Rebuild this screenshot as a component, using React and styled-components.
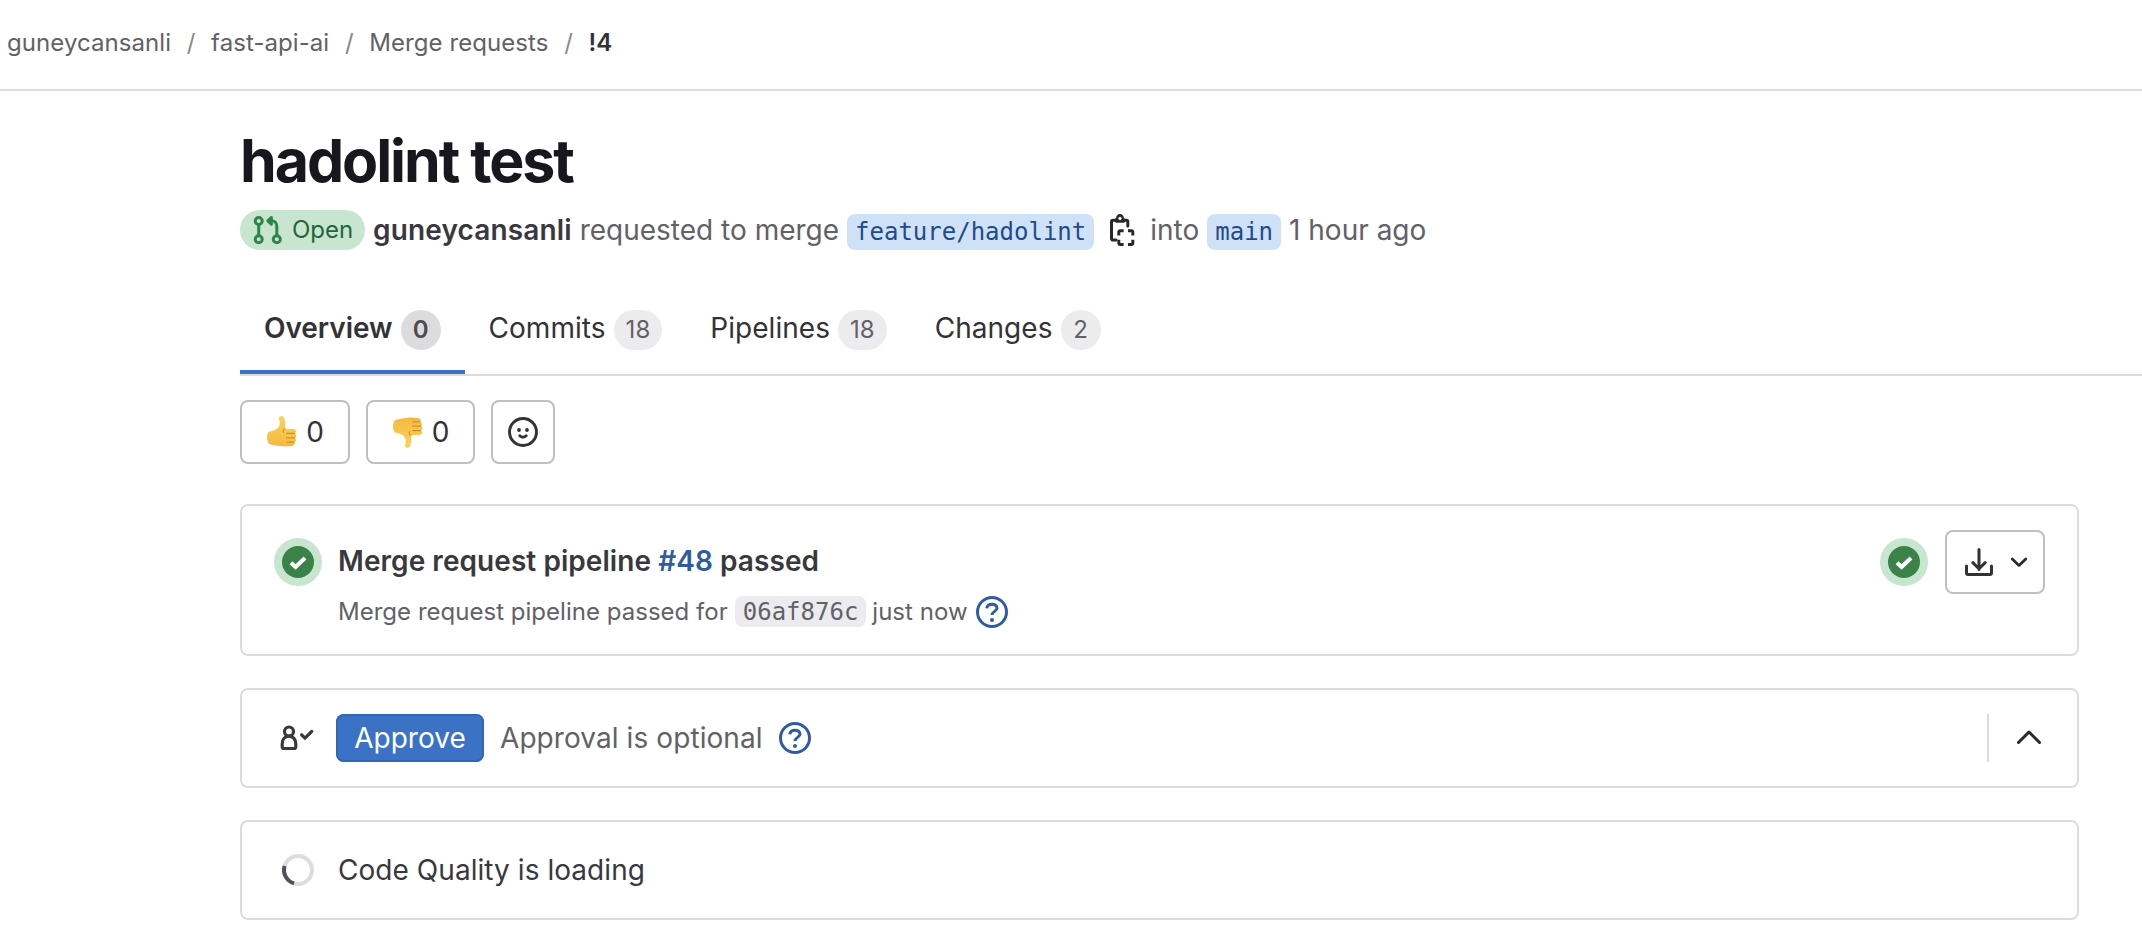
import React from "react";
import styled, { createGlobalStyle } from "styled-components";

const Global = createGlobalStyle`
  * { box-sizing: border-box; }
  body { margin: 0; background: #fff; color: #3a383f; font-family: Inter, "Noto Sans", sans-serif; font-size: 28px; line-height: 40px; }
  svg { display: block; flex: none; overflow: visible; }
`;

const Page = styled.div`width: 100%; height: 940px; overflow: hidden; background: #fff;`;

const TopBar = styled.nav`
  display: flex; align-items: center; height: 91px; padding: 0 0 4px 7px; letter-spacing: 0.07px;
  border-bottom: 2px solid #dcdcde; font-size: 24px; color: #626168; white-space: pre;
`;
const Crumb = styled.span`
  color: ${(p) => (p.$current ? "#333238" : "#626168")};
  font-weight: ${(p) => (p.$current ? 600 : 400)};
`;
const Slash = styled.span`width: 40px; text-align: center; color: #89888d;`;

const Main = styled.main`padding: 35px 0 0 240px;`;
const Title = styled.h1`
  margin: 0; font-size: 59px; line-height: 70px; font-weight: 700; color: #18171d; letter-spacing: -2.05px; height: 70px;
`;
const Meta = styled.div`
  display: flex; align-items: center; height: 40px; margin-top: 14px; color: #626168; white-space: pre;
`;
const Status = styled.span`
  display: flex; align-items: center; width: 125px; height: 40px; padding-left: 12px; gap: 8px;
  border-radius: 20px; background: #c8e5cf; color: #24663b; font-size: 24px; margin-right: 8px;
`;
const Author = styled.strong`font-weight: 600; color: #3a383f; margin-right: 8px; letter-spacing: 0.14px;`;
const Branch = styled.code`
  height: 36px; padding: 0 8px; margin: 4px 0 0 8px; border-radius: 8px;
  background: #cfe1f7; color: #214a8b; font: 24px/36px "DejaVu Sans Mono", monospace;
`;
const CopyButton = styled.span`margin: 0 12px 0 12px;`;
const Ago = styled.span`margin-left: 8px;`;

const Tabs = styled.div`
  display: flex; height: 70px; margin-top: 56px; border-bottom: 2px solid #dcdcde;
`;
const Tab = styled.div`
  display: flex; gap: 8px; padding: 2px 24px 0; height: 68px;
  color: #333238; font-weight: ${(p) => (p.$active ? 600 : 400)};
  letter-spacing: ${(p) => (p.$active ? "-0.05px" : "0.04px")};
  border-bottom: 4px solid ${(p) => (p.$active ? "#3b72c6" : "transparent")};
`;
const Count = styled.span`
  margin-top: 2px; min-width: 40px; padding: 0 12px; height: 40px; line-height: 40px; text-align: center;
  border-radius: 20px; font-size: 24px;
  background: ${(p) => (p.$active ? "#dcdcde" : "#ececef")};
  color: ${(p) => (p.$active ? "#4c4b51" : "#626168")};
`;

const Reactions = styled.div`display: flex; gap: 16px; margin-top: 24px;`;
const Button = styled.button`
  display: flex; align-items: center; justify-content: center; gap: 8px; height: 64px; width: ${(p) => p.$w}px;
  padding: 0; border: 2px solid #bfbfc3; border-radius: 8px; background: #fff; color: #333238; font: inherit;
`;

const Card = styled.section`
  display: flex; width: 1839px; height: ${(p) => p.$h}px; margin-top: ${(p) => p.$mt || 32}px;
  padding: 24px 32px 24px ${(p) => (p.$inset ? 40 : 32)}px; border: 2px solid #dcdcde; border-radius: 8px;
  align-items: ${(p) => p.$align || "center"};
`;
const CardBody = styled.div`flex: 1; margin-left: 16px;`;
const PipelineTitle = styled.div`font-weight: 600; white-space: pre; height: 40px; margin-top: 11px; letter-spacing: 0.06px;`;
const PipelineLink = styled.a`color: #2f5ca0;`;
const PipelineSub = styled.div`
  display: flex; align-items: center; height: 32px; margin-top: 15px; font-size: 24px; line-height: 32px;
  letter-spacing: 0.02px; color: #626168; white-space: pre;
`;
const Sha = styled.code`
  height: 31px; margin: 0 6px 1px 7px; padding: 0 8px; border-radius: 8px; background: #ececef; color: #626168;
  font: 24px/32px "DejaVu Sans Mono", monospace; letter-spacing: 0;
`;
const Actions = styled.div`display: flex; align-items: center; gap: 17px;`;
const StatusSlot = styled.span`margin-top: 8px;`;
const HelpSlot = styled.span`margin-left: ${(p) => p.$ml}px;`;
const CaretSlot = styled.span`margin: 0 -4px 0 4px;`;
const Approve = styled.button`
  width: 148px; height: 48px; margin-left: 22px; padding: 0; border: 0; border-radius: 8px; background: #3b72c6;
  box-shadow: inset 0 0 0 2px #2f68b4; color: #fff; font: inherit; line-height: 48px;
`;
const Optional = styled.span`margin-left: 16px; color: #626168; letter-spacing: 0.08px;`;
const Toggle = styled.div`
  display: flex; align-items: center; margin-left: auto; height: 48px; padding-left: 24px; border-left: 2px solid #dcdcde;
`;
const Loading = styled.span`margin-left: 24px; letter-spacing: 0.05px;`;

const Stroke = ({ size = 32, sw = 1.5, children, ...rest }) => (
  <svg width={size} height={size} viewBox="0 0 16 16" fill="none" stroke="currentColor" strokeWidth={sw} {...rest}>{children}</svg>
);
const MergeIcon = () => (
  <Stroke color="#2f8549">
    <circle cx="3.35" cy="3.5" r="1.75" /><circle cx="3.35" cy="12.6" r="1.75" /><circle cx="12.4" cy="12.6" r="1.75" />
    <path d="M3.35 5.25v5.6M12.4 10.85V6a2.6 2.6 0 0 0-2.6-2.6H8.4" />
    <path d="M9.7 1.7 7.9 3.4l1.8 1.7z" fill="currentColor" strokeLinecap="round" strokeLinejoin="round" />
  </Stroke>
);
const CopyIcon = () => (
  <Stroke color="#28272d">
    <path d="M5 13.05H3.5a.75.75 0 0 1-.75-.75V3.85a.75.75 0 0 1 .75-.75H5m4 0h1.15a.75.75 0 0 1 .75.75V6" strokeLinecap="round" />
    <path d="M4.5 2.3h.5a2 2.3 0 0 1 4 0h.5v1.3a.75.75 0 0 1-.75.75h-3.500a.75.75 0 0 1-.75-.75z" fill="currentColor" stroke="none" />
    <circle cx="7" cy="2.2" r=".8" fill="#fff" stroke="none" />
    <path d="M6.4 10.7V9.150a.75.75 0 0 1 .75-.75H8.800M11 8.400h1.650a.75.75 0 0 1 .75.75v1.550M13.400 12.900v1.550a.75.75 0 0 1-.75.75H11M8.800 15.200H7.150a.75.75 0 0 1-.75-.75V12.900" />
  </Stroke>
);
const CheckBadge = () => (
  <svg width="48" height="48" viewBox="0 0 48 48">
    <circle cx="24" cy="24" r="24" fill="#c8e5cf" /><circle cx="24" cy="24" r="16" fill="#3b8249" />
    <path d="M17 24.7 21.6 29 31 20" fill="none" stroke="#fff" strokeWidth="4" />
  </svg>
);
const HelpIcon = () => (
  <Stroke color="#2f5ca0">
    <circle cx="8" cy="8" r="7.25" />
    <path d="M5.4 6.2C5.5 4.900 6.600 4.100 8 4.100s2.500.8 2.500 2c0 1.500-2.500 1.700-2.500 3.400" /><circle cx="8" cy="12" r="1" fill="currentColor" stroke="none" />
  </Stroke>
);
const DownloadIcon = () => (
  <Stroke strokeLinecap="round" strokeLinejoin="round">
    <path d="M8 1.75v10M4.9 8.3 8 11.4l3.1-3.1M1.75 10v3.5c0 .4.35.75.75.75h11c.4 0 .75-.35.75-.75V10" />
  </Stroke>
);
const ChevronIcon = ({ up }) => (
  <Stroke size={up ? 32 : 24} sw={up ? 1.5 : 1.8} strokeLinecap="round" strokeLinejoin="round" color="#28272d">
    <path d={up ? "M2.75 10.25 8 5l5.25 5.25" : "M3.5 6 8 10.3 12.5 6"} />
  </Stroke>
);
const SmileIcon = () => (
  <Stroke>
    <circle cx="8" cy="8" r="6.75" /><circle cx="6" cy="7" r=".95" fill="currentColor" stroke="none" /><circle cx="10" cy="7" r=".95" fill="currentColor" stroke="none" />
    <path d="M6.4 9.9c.9.900 2.300.900 3.200 0" strokeLinecap="round" />
  </Stroke>
);
const ApprovalIcon = () => (
  <Stroke sw={1.6}>
    <circle cx="3.5" cy="4.75" r="2.25" />
    <path d="M3.500 7.100C1.400 7.100.1 8.700.1 11v1.200c0 .6.4 1.050 1 1.050h4.800c.6 0 1-.45 1-1.050V11c0-2.300-1.300-3.900-3.400-3.900z" />
    <path d="m9.800 6.400 1.700 1.700 3.400-3.400" strokeLinecap="round" strokeLinejoin="round" />
  </Stroke>
);
const Spinner = () => (
  <svg width="32" height="32" viewBox="0 0 32 32" fill="none" strokeWidth="4">
    <circle cx="16" cy="16" r="14" stroke="#dcdcde" /><path d="M2.6 12A14 14 0 0 0 12 29.4" stroke="#535158" />
  </svg>
);
const Thumb = ({ down }) => (
  <svg width="32" height="34" viewBox="0 0 32 34">
    <defs><linearGradient id="skin" x1="0" y1="0" x2="0" y2="1"><stop offset="0" stopColor="#fbd458" /><stop offset="1" stopColor="#f4b940" /></linearGradient></defs>
    <g transform={down ? "matrix(1 0 0 -1 0 34)" : undefined}>
      <path d="M13 3.500c-.3-2.900 4-3.600 5.200-.6 1.200 3.200 1.300 6.800.9 10.800l8.200.2c3.200.2 3.600 3.600 1.400 4.500 2.300.9 2.100 3.900.1 4.500 1.800 1 1.400 3.700-.6 4.200 1.200 1.500.2 3.600-2.200 3.800-4.300.5-8.200.7-11 .2-4.200-.3-8.500-.8-11.800-2.100C.6 26.500.5 20 2.200 17.600c1.600-2 5.800-1.700 8-3.400C14 11.600 14.400 8.500 13 3.500z" fill="url(#skin)" />
      <path d="M20.500 18.400h8M20.500 22.900h8M21 27.100h7M18.900 13.700c-1.900.8-2.400 2.500-1.300 3.700" fill="none" stroke="#cf8f30" strokeWidth="1.100" strokeLinecap="round" />
    </g>
  </svg>
);

const TABS = [["Overview", 0], ["Commits", 18], ["Pipelines", 18], ["Changes", 2]];

export default function App() {
  return (
    <Page>
      <Global />
      <TopBar>
        <Crumb>guneycansanli</Crumb><Slash>/</Slash><Crumb>fast-api-ai</Crumb><Slash>/</Slash>
        <Crumb>Merge requests</Crumb><Slash>/</Slash><Crumb $current>!4</Crumb>
      </TopBar>
      <Main>
        <Title>hadolint test</Title>
        <Meta>
          <Status><MergeIcon />Open</Status>
          <Author>guneycansanli</Author>
          <span>requested to merge</span>
          <Branch>feature/hadolint</Branch>
          <CopyButton><CopyIcon /></CopyButton>
          <span>into</span>
          <Branch>main</Branch>
          <Ago>1 hour ago</Ago>
        </Meta>
        <Tabs>
          {TABS.map(([name, n], i) => (
            <Tab key={name} $active={i === 0}>{name}<Count $active={i === 0}>{n}</Count></Tab>
          ))}
        </Tabs>
        <Reactions>
          <Button $w={110}><Thumb />0</Button>
          <Button $w={109}><Thumb down />0</Button>
          <Button $w={64}><SmileIcon /></Button>
        </Reactions>
        <Card $h={152} $mt={40} $align="flex-start">
          <StatusSlot><CheckBadge /></StatusSlot>
          <CardBody>
            <PipelineTitle>Merge request pipeline <PipelineLink>#48</PipelineLink> passed</PipelineTitle>
            <PipelineSub>
              Merge request pipeline passed for<Sha>06af876c</Sha>just now<HelpSlot $ml={8}><HelpIcon /></HelpSlot>
            </PipelineSub>
          </CardBody>
          <Actions>
            <CheckBadge />
            <Button $w={100}><DownloadIcon /><CaretSlot><ChevronIcon /></CaretSlot></Button>
          </Actions>
        </Card>
        <Card $h={100} $inset>
          <ApprovalIcon />
          <Approve>Approve</Approve>
          <Optional>Approval is optional</Optional>
          <HelpSlot $ml={16}><HelpIcon /></HelpSlot>
          <Toggle><ChevronIcon up /></Toggle>
        </Card>
        <Card $h={100} $inset>
          <Spinner />
          <Loading>Code Quality is loading</Loading>
        </Card>
      </Main>
    </Page>
  );
}
